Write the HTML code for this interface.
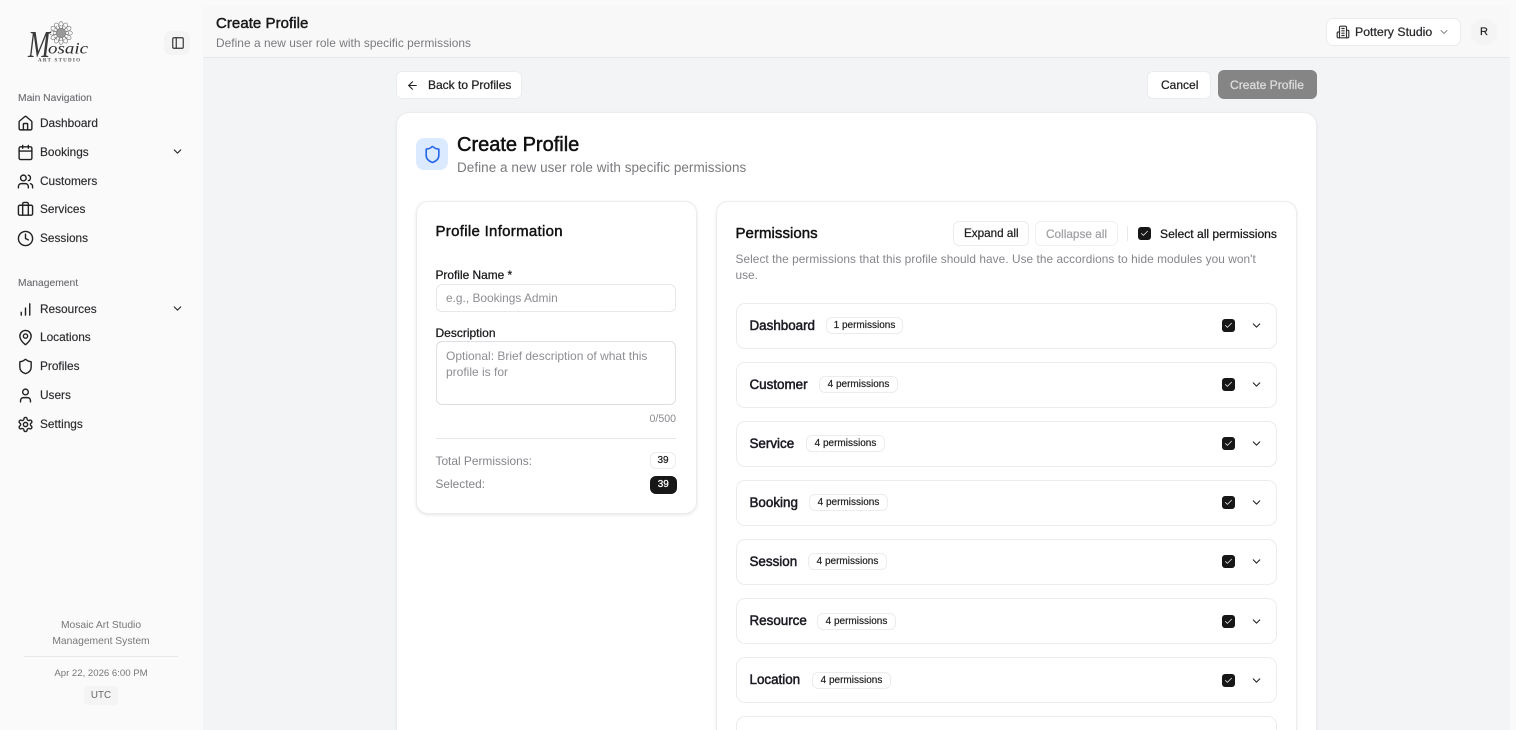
<!DOCTYPE html>
<html><head><meta charset="utf-8"><title>Create Profile</title>
<style>
*{box-sizing:border-box}
html,body{margin:0;padding:0;width:1516px;height:730px;overflow:hidden;background:#f3f4f6;font-family:"Liberation Sans",sans-serif;color:#18181b}
#root{position:relative;width:1516px;height:730px;overflow:hidden;background:#f3f4f6}
.a{position:absolute}
.t{position:absolute;white-space:nowrap;line-height:16px;height:16px}
.m{-webkit-text-stroke:.25px currentColor}
.s{-webkit-text-stroke:.45px currentColor}
.box{position:absolute;background:#fff;border:1px solid #ececee}
.nav{font-size:11.85px;color:#2a2a2e;-webkit-text-stroke:.15px currentColor;left:40px}
.lab{font-size:10.3px;color:#6b6b70;left:18px;-webkit-text-stroke:.1px currentColor}
.i{position:absolute;fill:none;stroke:currentColor;stroke-width:2;stroke-linecap:round;stroke-linejoin:round}
.acc{position:absolute;left:736px;width:541px;height:46px;background:#fff;border:1px solid #ececee;border-radius:9px}
.ttl{position:absolute;left:12.5px;top:14px;font-size:13.4px;line-height:16px;white-space:nowrap;-webkit-text-stroke:.5px currentColor;color:#1a1a22}
.bdg{position:absolute;top:13.5px;height:17px;line-height:15px;font-size:10px;border:1px solid #ececee;border-radius:6px;text-align:center;white-space:nowrap;color:#222;-webkit-text-stroke:.2px currentColor;background:#fff}
.cb{position:absolute;width:13px;height:13px;background:#171717;border-radius:3px}
.cb svg{position:absolute;left:2px;top:2px;width:9px;height:9px;fill:none;stroke:#eee;stroke-width:2.2;stroke-linecap:round;stroke-linejoin:round}
.acc .cb{left:485px;top:15.5px}
.acc .i{left:513px;top:15.5px;width:13px;height:13px;color:#222}
.n{width:17px;height:17px;left:17px;color:#222}
</style></head><body>
<svg width="0" height="0" style="position:absolute">
<defs>
<symbol id="house" viewBox="0 0 24 24"><path d="M15 21v-8a1 1 0 0 0-1-1h-4a1 1 0 0 0-1 1v8"/><path d="M3 10a2 2 0 0 1 .709-1.528l7-6a2 2 0 0 1 2.582 0l7 6A2 2 0 0 1 21 10v9a2 2 0 0 1-2 2H5a2 2 0 0 1-2-2z"/></symbol>
<symbol id="cal" viewBox="0 0 24 24"><path d="M8 2v4M16 2v4"/><rect x="3" y="4" width="18" height="18" rx="2"/><path d="M3 10h18"/></symbol>
<symbol id="users" viewBox="0 0 24 24"><path d="M16 21v-2a4 4 0 0 0-4-4H6a4 4 0 0 0-4 4v2"/><circle cx="9" cy="7" r="4"/><path d="M22 21v-2a4 4 0 0 0-3-3.87"/><path d="M16 3.13a4 4 0 0 1 0 7.75"/></symbol>
<symbol id="brief" viewBox="0 0 24 24"><path d="M16 20V4a2 2 0 0 0-2-2h-4a2 2 0 0 0-2 2v16"/><rect x="2" y="6" width="20" height="14" rx="2"/></symbol>
<symbol id="clock" viewBox="0 0 24 24"><circle cx="12" cy="12" r="10"/><path d="M12 6v6l4 2"/></symbol>
<symbol id="chart" viewBox="0 0 24 24"><path d="M12 20V10M18 20V4M6 20v-4"/></symbol>
<symbol id="pin" viewBox="0 0 24 24"><path d="M20 10c0 4.993-5.539 10.193-7.399 11.799a1 1 0 0 1-1.202 0C9.539 20.193 4 14.993 4 10a8 8 0 0 1 16 0"/><circle cx="12" cy="10" r="3"/></symbol>
<symbol id="shield" viewBox="0 0 24 24"><path d="M20 13c0 5-3.5 7.5-7.66 8.95a1 1 0 0 1-.67-.01C7.5 20.5 4 18 4 13V6a1 1 0 0 1 1-1c2 0 4.5-1.2 6.24-2.72a1.17 1.17 0 0 1 1.52 0C14.51 3.81 17 5 19 5a1 1 0 0 1 1 1z"/></symbol>
<symbol id="user" viewBox="0 0 24 24"><path d="M19 21v-2a4 4 0 0 0-4-4H9a4 4 0 0 0-4 4v2"/><circle cx="12" cy="7" r="4"/></symbol>
<symbol id="gear" viewBox="0 0 24 24"><path d="M12.22 2h-.44a2 2 0 0 0-2 2v.18a2 2 0 0 1-1 1.73l-.43.25a2 2 0 0 1-2 0l-.15-.08a2 2 0 0 0-2.73.73l-.22.38a2 2 0 0 0 .73 2.73l.15.1a2 2 0 0 1 1 1.72v.51a2 2 0 0 1-1 1.74l-.15.09a2 2 0 0 0-.73 2.73l.22.38a2 2 0 0 0 2.73.73l.15-.08a2 2 0 0 1 2 0l.43.25a2 2 0 0 1 1 1.73V20a2 2 0 0 0 2 2h.44a2 2 0 0 0 2-2v-.18a2 2 0 0 1 1-1.73l.43-.25a2 2 0 0 1 2 0l.15.08a2 2 0 0 0 2.73-.73l.22-.39a2 2 0 0 0-.73-2.73l-.15-.08a2 2 0 0 1-1-1.74v-.5a2 2 0 0 1 1-1.74l.15-.09a2 2 0 0 0 .73-2.73l-.22-.38a2 2 0 0 0-2.73-.73l-.15.08a2 2 0 0 1-2 0l-.43-.25a2 2 0 0 1-1-1.73V4a2 2 0 0 0-2-2z"/><circle cx="12" cy="12" r="3"/></symbol>
<symbol id="panel" viewBox="0 0 24 24"><rect x="3" y="3" width="18" height="18" rx="2"/><path d="M9 3v18"/></symbol>
<symbol id="bld" viewBox="0 0 24 24"><path d="M6 22V4a2 2 0 0 1 2-2h8a2 2 0 0 1 2 2v18Z"/><path d="M6 12H4a2 2 0 0 0-2 2v6a2 2 0 0 0 2 2h2"/><path d="M18 9h2a2 2 0 0 1 2 2v9a2 2 0 0 1-2 2h-2"/><path d="M10 6h4M10 10h4M10 14h4M10 18h4"/></symbol>
<symbol id="back" viewBox="0 0 24 24"><path d="m12 19-7-7 7-7"/><path d="M19 12H5"/></symbol>
<symbol id="chev" viewBox="0 0 24 24"><path d="m6 9 6 6 6-6"/></symbol>
<symbol id="chk" viewBox="0 0 24 24"><path d="M20 6 9 17l-5-5"/></symbol>
<ellipse id="pet" cx="0" cy="-8" rx="2.2" ry="3.4" fill="none" stroke="#777" stroke-width=".6"/>
</defs></svg>
<div id="root">
<!-- sidebar -->
<div class="a" style="left:0;top:0;width:203px;height:730px;background:#fafafa"></div>
<div class="a" style="left:1510px;top:0;width:6px;height:730px;background:#fafafa"></div>
<div class="a" style="left:203px;top:0;width:1307px;height:6px;background:#fafafa"></div>
<div class="a" style="left:203px;top:6px;width:1307px;height:52px;background:#f8f8f8;border-bottom:1px solid #e8e8ea"></div>

<!-- logo -->
<svg class="a" style="left:20px;top:18px" width="80" height="48" viewBox="20 18 80 48">
<g transform="translate(61 33)">
<circle r="5" fill="#999"/><circle r="7.5" fill="none" stroke="#888" stroke-width="1" stroke-dasharray="1 1"/>
<use href="#pet"/><use href="#pet" transform="rotate(30)"/><use href="#pet" transform="rotate(60)"/><use href="#pet" transform="rotate(90)"/><use href="#pet" transform="rotate(120)"/><use href="#pet" transform="rotate(150)"/><use href="#pet" transform="rotate(180)"/><use href="#pet" transform="rotate(210)"/><use href="#pet" transform="rotate(240)"/><use href="#pet" transform="rotate(270)"/><use href="#pet" transform="rotate(300)"/><use href="#pet" transform="rotate(330)"/>
</g>
<text x="28" y="57" font-family="Liberation Serif" font-style="italic" font-size="38" fill="#3a3a3a" textLength="22" lengthAdjust="spacingAndGlyphs">M</text>
<text x="48" y="53.5" font-family="Liberation Serif" font-style="italic" font-size="16" fill="#2c2c2c" textLength="40" lengthAdjust="spacingAndGlyphs">osaic</text>
<text x="38" y="61.5" font-family="Liberation Serif" font-weight="bold" font-size="5" fill="#555" textLength="42">ART STUDIO</text>
</svg>
<div class="a" style="left:164px;top:31px;width:26px;height:24px;background:#f4f4f5;border-radius:7px"></div>
<svg class="i" style="left:170.5px;top:36px;color:#333" width="14" height="14"><use href="#panel"/></svg>

<div class="t lab" style="top:91px">Main Navigation</div>
<svg class="i n" style="top:114.5px"><use href="#house"/></svg><div class="t nav" style="top:115px">Dashboard</div>
<svg class="i n" style="top:143.5px"><use href="#cal"/></svg><div class="t nav" style="top:144px">Bookings</div>
<svg class="i" style="left:171px;top:145px;color:#222" width="13" height="13"><use href="#chev"/></svg>
<svg class="i n" style="top:172.5px"><use href="#users"/></svg><div class="t nav" style="top:172.5px">Customers</div>
<svg class="i n" style="top:201px"><use href="#brief"/></svg><div class="t nav" style="top:201px">Services</div>
<svg class="i n" style="top:230px"><use href="#clock"/></svg><div class="t nav" style="top:230px">Sessions</div>

<div class="t lab" style="top:276px">Management</div>
<svg class="i n" style="top:300.5px"><use href="#chart"/></svg><div class="t nav" style="top:301px">Resources</div>
<svg class="i" style="left:171px;top:302px;color:#222" width="13" height="13"><use href="#chev"/></svg>
<svg class="i n" style="top:329px"><use href="#pin"/></svg><div class="t nav" style="top:329px">Locations</div>
<svg class="i n" style="top:358px"><use href="#shield"/></svg><div class="t nav" style="top:358px">Profiles</div>
<svg class="i n" style="top:387px"><use href="#user"/></svg><div class="t nav" style="top:387px">Users</div>
<svg class="i n" style="top:415.5px"><use href="#gear"/></svg><div class="t nav" style="top:416px">Settings</div>

<div class="t" style="left:0;width:202px;text-align:center;top:618px;font-size:10.3px;color:#777">Mosaic Art Studio</div>
<div class="t" style="left:0;width:202px;text-align:center;top:634px;font-size:10.3px;color:#777">Management System</div>
<div class="a" style="left:24px;top:656px;width:154px;height:1px;background:#e8e8ea"></div>
<div class="t" style="left:0;width:202px;text-align:center;top:665.5px;font-size:9.6px;color:#777">Apr 22, 2026 6:00 PM</div>
<div class="a" style="left:84px;top:686px;width:34px;height:19px;background:#f4f4f5;border-radius:4px;text-align:center;font-size:9.8px;line-height:19px;color:#666">UTC</div>

<!-- header -->
<div class="t s" style="left:216px;top:16px;font-size:15px;letter-spacing:.05px;color:#18181b">Create Profile</div>
<div class="t" style="left:216px;top:35px;font-size:11.9px;color:#7a7a7f;letter-spacing:.04px">Define a new user role with specific permissions</div>
<div class="box" style="left:1326px;top:18px;width:135px;height:28px;border-radius:7px"></div>
<svg class="i" style="left:1336px;top:25px;color:#333" width="14" height="14"><use href="#bld"/></svg>
<div class="t m" style="left:1355px;top:24px;font-size:12.3px;color:#2a2a2e">Pottery Studio</div>
<svg class="i" style="left:1438px;top:26px;color:#888" width="12" height="12"><use href="#chev"/></svg>
<div class="a s" style="left:1471px;top:19px;width:26px;height:26px;border-radius:50%;background:#f4f4f5;text-align:center;line-height:26px;font-size:11px;color:#222;-webkit-text-stroke:.2px">R</div>

<!-- top actions -->
<div class="box" style="left:396px;top:71px;width:126px;height:28px;border-radius:6px"></div>
<svg class="i" style="left:406px;top:79px;color:#222" width="13" height="13"><use href="#back"/></svg>
<div class="t m" style="left:428px;top:77px;font-size:12px;color:#222">Back to Profiles</div>
<div class="box" style="left:1147px;top:71px;width:64px;height:28px;border-radius:6px"></div>
<div class="t m" style="left:1161px;top:77px;font-size:12px;color:#222">Cancel</div>
<div class="a" style="left:1218px;top:70px;width:99px;height:29px;border-radius:6px;background:#858585"></div>
<div class="t m" style="left:1230px;top:77px;font-size:12.1px;color:#dcdcdc;-webkit-text-stroke:.3px">Create Profile</div>

<!-- main card -->
<div class="box" style="left:396px;top:112px;width:921px;height:640px;border-radius:13px;box-shadow:0 1px 3px rgba(0,0,0,.06)"></div>
<div class="a" style="left:416px;top:138px;width:32px;height:32px;border-radius:8px;background:#dbeafe"></div>
<svg class="i" style="left:422.5px;top:144.5px;color:#2563eb" width="19" height="19"><use href="#shield"/></svg>
<div class="t s" style="left:457px;top:137px;font-size:20px;color:#111;-webkit-text-stroke:.5px">Create Profile</div>
<div class="t" style="left:457px;top:160px;font-size:13.5px;color:#7a7a7f;letter-spacing:.04px">Define a new user role with specific permissions</div>

<!-- profile info -->
<div class="box" style="left:416px;top:201px;width:281px;height:313px;border-radius:12px;box-shadow:0 1px 3px rgba(0,0,0,.1)"></div>
<div class="t s" style="left:435.5px;top:224px;font-size:15px;letter-spacing:.3px;color:#111">Profile Information</div>
<div class="t m" style="left:435.5px;top:267px;font-size:11.9px;color:#18181b">Profile Name *</div>
<div class="a" style="left:436px;top:283.5px;width:240px;height:28.5px;background:#fff;border:1px solid #e8e8ec;border-radius:6px"></div>
<div class="t" style="left:446px;top:290px;font-size:11.9px;color:#8e8e93">e.g., Bookings Admin</div>
<div class="t m" style="left:435.5px;top:324.5px;font-size:12px;color:#18181b">Description</div>
<div class="a" style="left:436px;top:341px;width:240px;height:64px;background:#fff;border:1px solid #dedee4;border-radius:6px"></div>
<div class="t" style="left:446px;top:348px;font-size:12px;color:#8e8e93">Optional: Brief description of what this</div>
<div class="t" style="left:446px;top:364px;font-size:12px;color:#8e8e93">profile is for</div>
<div class="t" style="left:576px;width:100px;text-align:right;top:410.5px;font-size:10.6px;color:#8a8a8f">0/500</div>
<div class="a" style="left:436px;top:438px;width:240px;height:1px;background:#e8e8ec"></div>
<div class="t" style="left:435.5px;top:452.5px;font-size:11.9px;color:#85858a">Total Permissions:</div>
<div class="a" style="left:650px;top:452px;width:26px;height:17px;background:#fff;border:1px solid #ececee;border-radius:6px;text-align:center;font-size:10px;line-height:15px;color:#222;-webkit-text-stroke:.25px">39</div>
<div class="t" style="left:435.5px;top:476px;font-size:11.9px;color:#85858a">Selected:</div>
<div class="a" style="left:650px;top:476px;width:26.5px;height:17.5px;background:#171717;border-radius:6px;text-align:center;font-size:10px;line-height:17px;color:#fff;-webkit-text-stroke:.25px">39</div>

<!-- permissions -->
<div class="box" style="left:716px;top:201px;width:581px;height:560px;border-radius:12px;box-shadow:0 1px 3px rgba(0,0,0,.08)"></div>
<div class="t s" style="left:735.5px;top:225.5px;font-size:15px;letter-spacing:.05px;color:#111">Permissions</div>
<div class="box" style="left:953px;top:221px;width:76px;height:25px;border-radius:6px"></div>
<div class="t m" style="left:964px;top:225.5px;font-size:11.7px;color:#222">Expand all</div>
<div class="box" style="left:1035px;top:221px;width:83px;height:25px;border-radius:6px;border-color:#f0f0f2"></div>
<div class="t m" style="left:1046px;top:225.5px;font-size:11.8px;color:#a2a2a6">Collapse all</div>
<div class="a" style="left:1127px;top:226px;width:1px;height:15px;background:#e8e8ec"></div>
<div class="cb" style="left:1138px;top:227px"><svg viewBox="0 0 24 24"><use href="#chk"/></svg></div>
<div class="t m" style="left:1160px;top:225.5px;font-size:12.1px;color:#18181b">Select all permissions</div>
<div class="t" style="left:735.5px;top:250.5px;font-size:11.85px;color:#85858a;letter-spacing:.06px">Select the permissions that this profile should have. Use the accordions to hide modules you won't</div>
<div class="t" style="left:735.5px;top:266.5px;font-size:11.85px;color:#85858a">use.</div>

<div class="acc" style="top:302.5px"><div class="ttl">Dashboard</div><div class="bdg" style="left:89px;width:77px">1 permissions</div><div class="cb"><svg viewBox="0 0 24 24"><use href="#chk"/></svg></div><svg class="i"><use href="#chev"/></svg></div>
<div class="acc" style="top:361.5px"><div class="ttl">Customer</div><div class="bdg" style="left:82px;width:79px">4 permissions</div><div class="cb"><svg viewBox="0 0 24 24"><use href="#chk"/></svg></div><svg class="i"><use href="#chev"/></svg></div>
<div class="acc" style="top:420.5px"><div class="ttl">Service</div><div class="bdg" style="left:69px;width:79px">4 permissions</div><div class="cb"><svg viewBox="0 0 24 24"><use href="#chk"/></svg></div><svg class="i"><use href="#chev"/></svg></div>
<div class="acc" style="top:479.5px"><div class="ttl">Booking</div><div class="bdg" style="left:72px;width:79px">4 permissions</div><div class="cb"><svg viewBox="0 0 24 24"><use href="#chk"/></svg></div><svg class="i"><use href="#chev"/></svg></div>
<div class="acc" style="top:538.5px"><div class="ttl">Session</div><div class="bdg" style="left:71px;width:79px">4 permissions</div><div class="cb"><svg viewBox="0 0 24 24"><use href="#chk"/></svg></div><svg class="i"><use href="#chev"/></svg></div>
<div class="acc" style="top:598px"><div class="ttl">Resource</div><div class="bdg" style="left:80px;width:79px">4 permissions</div><div class="cb"><svg viewBox="0 0 24 24"><use href="#chk"/></svg></div><svg class="i"><use href="#chev"/></svg></div>
<div class="acc" style="top:657px"><div class="ttl">Location</div><div class="bdg" style="left:75px;width:79px">4 permissions</div><div class="cb"><svg viewBox="0 0 24 24"><use href="#chk"/></svg></div><svg class="i"><use href="#chev"/></svg></div>
<div class="acc" style="top:716px"></div>
</div>
</body></html>
